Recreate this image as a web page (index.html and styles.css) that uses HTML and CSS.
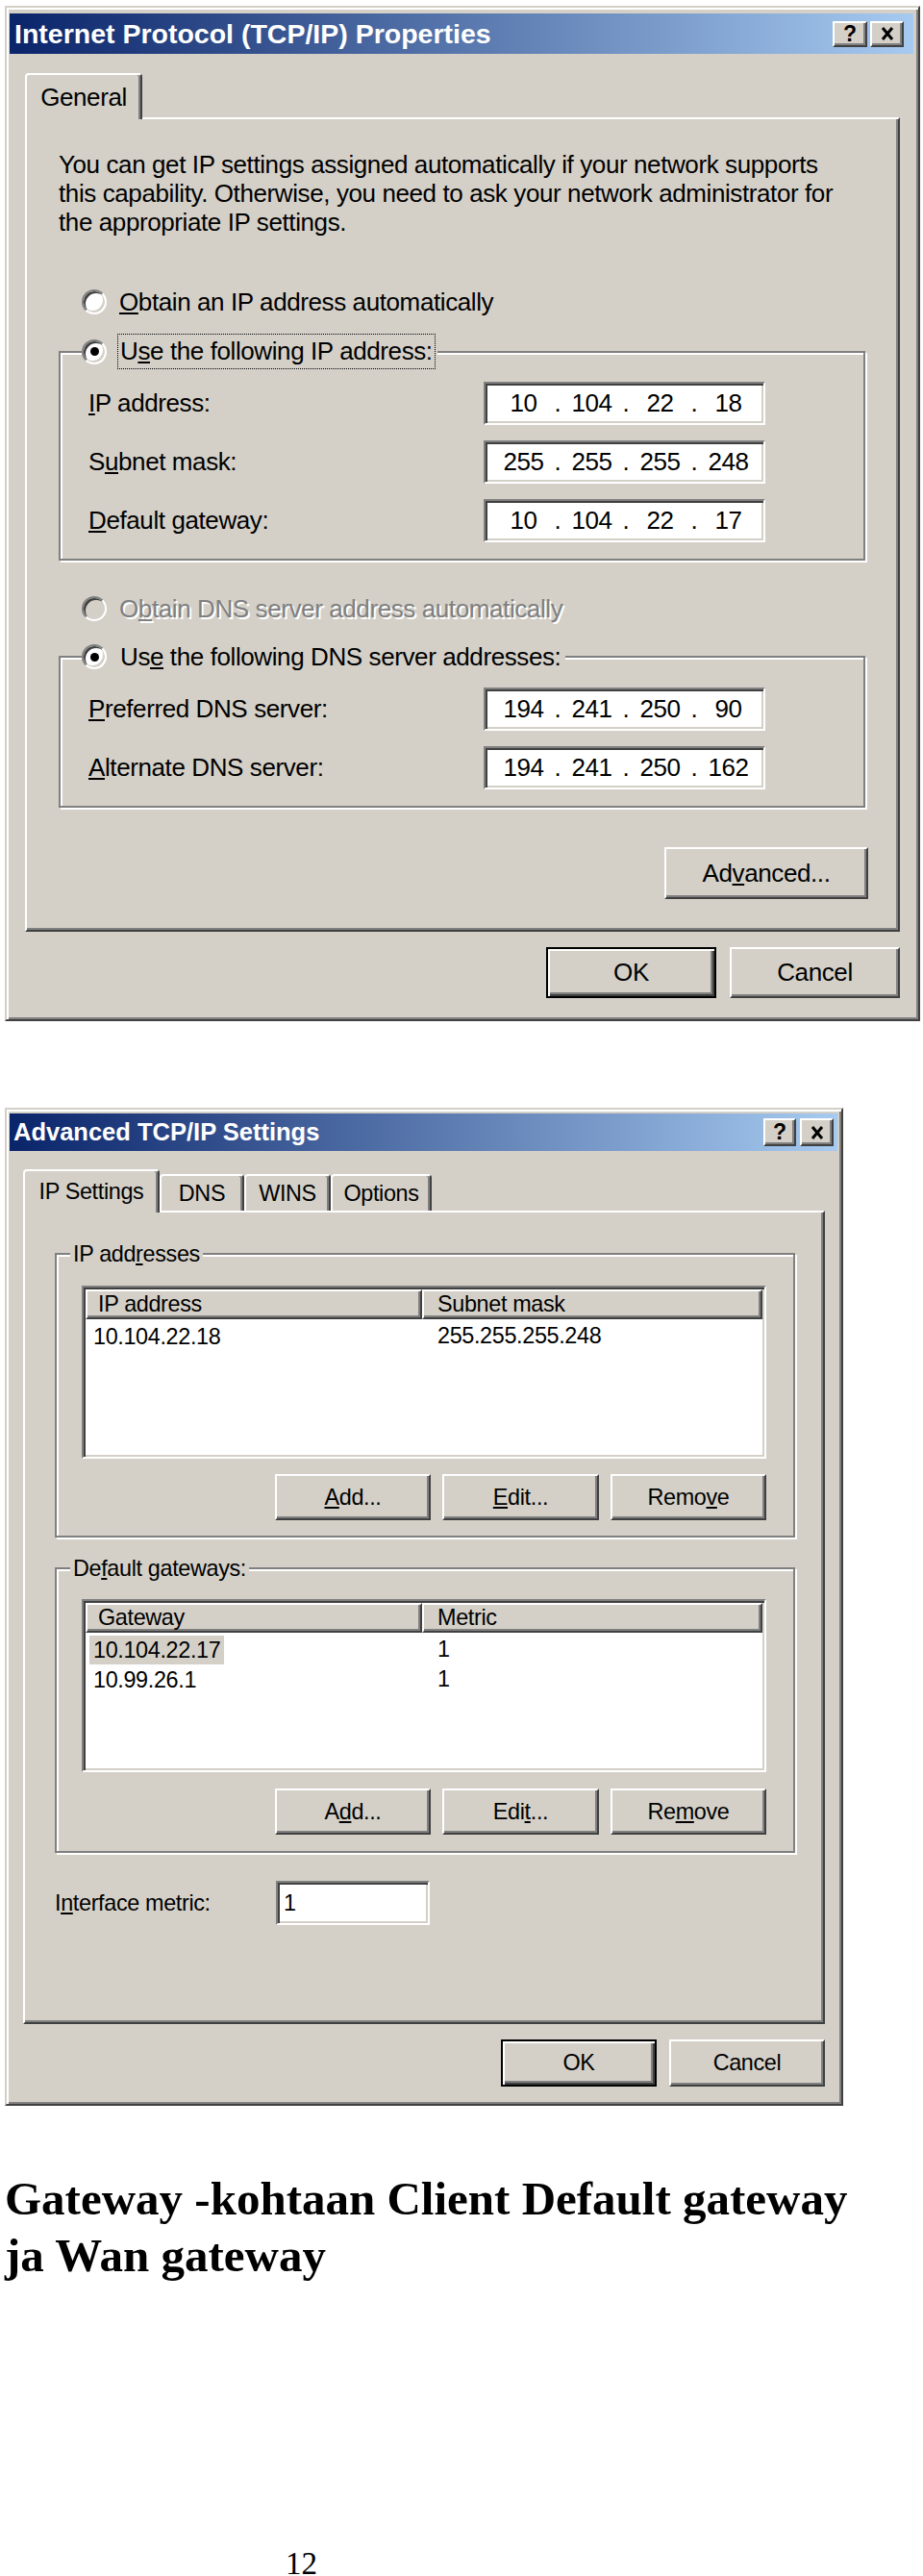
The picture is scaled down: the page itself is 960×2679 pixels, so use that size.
FILE: index.html
```html
<!DOCTYPE html>
<html>
<head>
<meta charset="utf-8">
<link rel="stylesheet" href="styles.css">
</head>
<body>
<div class="page">

  <div class="dlg dlg1">
    <div class="titlebar">
      <span class="title">Internet Protocol (TCP/IP) Properties</span>
      <div class="tbtns">
        <span class="tbtn q">?</span>
        <span class="tbtn"><svg class="xic" viewBox="0 0 14 16"><path d="M2 2 L12 14 M12 2 L2 14" stroke="#000" stroke-width="3" fill="none"/></svg></span>
      </div>
    </div>
    <div class="dbody">
      <div class="tabs">
        <div class="tab active">General</div>
      </div>
      <div class="panel">
        <div class="desc">You can get IP settings assigned automatically if your network supports<br>this capability. Otherwise, you need to ask your network administrator for<br>the appropriate IP settings.</div>

        <div class="rrow r1"><span class="rb"></span><span><u>O</u>btain an IP address automatically</span></div>

        <fieldset class="grp g1">
          <legend class="lg"><span class="rb on"></span><span class="lbtxt focus">U<u>s</u>e the following IP address:</span></legend>
          <div class="gbody">
            <div class="lbl"><u>I</u>P address:</div>
            <div class="ipf"><span class="seg">10</span><span class="dot">.</span><span class="seg">104</span><span class="dot">.</span><span class="seg">22</span><span class="dot">.</span><span class="seg">18</span></div>
            <div class="lbl">S<u>u</u>bnet mask:</div>
            <div class="ipf"><span class="seg">255</span><span class="dot">.</span><span class="seg">255</span><span class="dot">.</span><span class="seg">255</span><span class="dot">.</span><span class="seg">248</span></div>
            <div class="lbl"><u>D</u>efault gateway:</div>
            <div class="ipf"><span class="seg">10</span><span class="dot">.</span><span class="seg">104</span><span class="dot">.</span><span class="seg">22</span><span class="dot">.</span><span class="seg">17</span></div>
          </div>
        </fieldset>

        <div class="rrow r3 disabled"><span class="rb dis"></span><span>O<u>b</u>tain DNS server address automatically</span></div>

        <fieldset class="grp g2">
          <legend class="lg"><span class="rb on"></span><span class="lbtxt">Us<u>e</u> the following DNS server addresses:</span></legend>
          <div class="gbody">
            <div class="lbl"><u>P</u>referred DNS server:</div>
            <div class="ipf"><span class="seg">194</span><span class="dot">.</span><span class="seg">241</span><span class="dot">.</span><span class="seg">250</span><span class="dot">.</span><span class="seg">90</span></div>
            <div class="lbl"><u>A</u>lternate DNS server:</div>
            <div class="ipf"><span class="seg">194</span><span class="dot">.</span><span class="seg">241</span><span class="dot">.</span><span class="seg">250</span><span class="dot">.</span><span class="seg">162</span></div>
          </div>
        </fieldset>

        <div class="advrow"><button class="btn adv">Ad<u>v</u>anced...</button></div>
      </div>
      <div class="footer">
        <button class="btn def">OK</button>
        <button class="btn">Cancel</button>
      </div>
    </div>
  </div>

  <div class="dlg dlg2">
    <div class="titlebar">
      <span class="title">Advanced TCP/IP Settings</span>
      <div class="tbtns">
        <span class="tbtn q">?</span>
        <span class="tbtn"><svg class="xic" viewBox="0 0 14 16"><path d="M2 2 L12 14 M12 2 L2 14" stroke="#000" stroke-width="3" fill="none"/></svg></span>
      </div>
    </div>
    <div class="dbody">
      <div class="tabs">
        <div class="tab active t-ip">IP Settings</div>
        <div class="tab t-dns">DNS</div>
        <div class="tab t-wins">WINS</div>
        <div class="tab t-opt">Options</div>
      </div>
      <div class="panel">
        <fieldset class="grp h1">
          <legend class="lg2">IP add<u>r</u>esses</legend>
          <div class="gbody2">
            <div class="list">
              <div class="lhead"><div class="hcell c1">IP address</div><div class="hcell c2">Subnet mask</div></div>
              <div class="lrows">
                <div class="lrow"><div class="c1"><span class="it">10.104.22.18</span></div><div class="c2">255.255.255.248</div></div>
              </div>
            </div>
            <div class="brow">
              <button class="btn sb w162"><u>A</u>dd...</button>
              <button class="btn sb w163"><u>E</u>dit...</button>
              <button class="btn sb w162">Remo<u>v</u>e</button>
            </div>
          </div>
        </fieldset>

        <fieldset class="grp h2">
          <legend class="lg2">De<u>f</u>ault gateways:</legend>
          <div class="gbody2 gb2">
            <div class="list">
              <div class="lhead"><div class="hcell c1">Gateway</div><div class="hcell c2">Metric</div></div>
              <div class="lrows">
                <div class="lrow"><div class="c1"><span class="it sel">10.104.22.17</span></div><div class="c2">1</div></div>
                <div class="lrow"><div class="c1"><span class="it">10.99.26.1</span></div><div class="c2">1</div></div>
              </div>
            </div>
            <div class="brow b2">
              <button class="btn sb w162">A<u>d</u>d...</button>
              <button class="btn sb w163">Edi<u>t</u>...</button>
              <button class="btn sb w162">Re<u>m</u>ove</button>
            </div>
          </div>
        </fieldset>

        <div class="metric"><span class="mlbl">I<u>n</u>terface metric:</span><div class="tf">1</div></div>
      </div>
      <div class="footer">
        <button class="btn def">OK</button>
        <button class="btn">Cancel</button>
      </div>
    </div>
  </div>

  <div class="heading">Gateway -kohtaan Client Default gateway ja Wan gateway</div>
  <div class="pageno">12</div>
</div>
</body>
</html>
```

FILE: styles.css
```css
* { box-sizing: border-box; }
html, body { margin: 0; padding: 0; background: #fff; overflow: hidden; }
body { font-family: "Liberation Sans", Arial, sans-serif; color: #000; }

.page { padding: 6px 0 0 5px; }

/* ---------- dialog frame ---------- */
.dlg {
  background: #d4d0c8;
  border: 2px solid;
  border-color: #d4d0c8 #404040 #404040 #d4d0c8;
  box-shadow: inset 2px 2px #fff, inset -2px -2px #808080;
  display: flex;
  flex-direction: column;
}
.dlg1 { width: 952px; height: 1056px; padding: 6px 5px 0 3px; font-size: 26px; letter-spacing: -0.4px; }
.dlg2 { width: 872px; height: 1038px; padding: 4px 4px 0 3px; font-size: 23.4px; letter-spacing: -0.35px; margin-top: 90px; }

.titlebar {
  flex: none;
  display: flex;
  align-items: center;
  justify-content: space-between;
  background: linear-gradient(to right, #0a246a, #a6caf0);
  color: #fff;
  font-weight: bold;
  letter-spacing: 0;
}
.dlg1 .titlebar { height: 42px; padding: 0 10px 0 5px; font-size: 28.5px; }
.dlg2 .titlebar { height: 39px; padding: 0 4px 0 4px; font-size: 25.5px; }

.tbtns { display: flex; gap: 3px; }
.dlg2 .tbtns { gap: 4px; }
.tbtn {
  display: flex;
  align-items: center;
  justify-content: center;
  background: #d4d0c8;
  border: 2px solid;
  border-color: #fff #404040 #404040 #fff;
  box-shadow: inset -2px -2px #808080;
  color: #000;
  font-size: 23px;
  font-weight: bold;
  line-height: 1;
}
.dlg1 .tbtn { width: 36px; height: 27px; }
.dlg1 .tbtn + .tbtn { width: 35px; }
.dlg2 .tbtn { width: 34px; height: 29px; }
.dlg2 .tbtn + .tbtn { width: 35px; }
.xic { width: 14px; height: 16px; }

/* ---------- body / tabs ---------- */
.dbody { flex: 1; display: flex; flex-direction: column; }
.dlg1 .dbody { padding: 20px 14px 0 16px; }
.dlg2 .dbody { padding: 19px 13px 0 14px; }

.tabs { display: flex; align-items: flex-end; flex: none; }
.dlg1 .tabs { height: 46px; }
.dlg2 .tabs { height: 43px; }

.tab {
  display: flex;
  align-items: center;
  justify-content: center;
  background: #d4d0c8;
  border: 2px solid;
  border-bottom: 0;
  border-color: #fff #404040 #404040 #fff;
  box-shadow: inset -2px 0 #808080;
  border-radius: 4px 4px 0 0;
}
.tab.active { position: relative; z-index: 1; margin-bottom: -2px; }
.dlg1 .tab.active { width: 122px; height: 48px; }
.dlg2 .tab { height: 38px; }
.dlg2 .tab.active { height: 45px; }
.t-ip { width: 142px; }
.t-dns { width: 88px; }
.t-wins { width: 90px; }
.t-opt { width: 105px; }

.panel {
  flex: none;
  background: #d4d0c8;
  border: 2px solid;
  border-color: #fff #404040 #404040 #fff;
  box-shadow: inset -2px -2px #808080;
}
.dlg1 .panel { height: 847px; }
.dlg2 .panel { height: 846px; }

.footer { display: flex; justify-content: flex-end; margin-top: 16px; }
.dlg1 .footer { gap: 14px; }
.dlg1 .footer .btn { width: 177px; height: 53px; }
.dlg2 .footer { gap: 13px; }
.dlg2 .footer .btn { width: 162px; height: 49px; }

/* ---------- buttons ---------- */
.btn {
  font: inherit;
  letter-spacing: inherit;
  color: #000;
  background: #d4d0c8;
  border: 2px solid;
  border-color: #fff #404040 #404040 #fff;
  box-shadow: inset -2px -2px #808080;
  padding: 0;
  display: flex;
  align-items: center;
  justify-content: center;
}
.btn.def {
  border-color: #000;
  box-shadow: inset 2px 2px #fff, inset -2px -2px #404040, inset -4px -4px #808080;
}

/* ---------- dialog 1 content ---------- */
.desc { margin: 32px 0 0 33px; line-height: 30px; }

.rrow { display: flex; align-items: center; gap: 13px; height: 36px; margin-left: 57px; }
.r1 { margin-top: 50px; }
.r3 { margin-top: 32px; }
.disabled { color: #808080; text-shadow: 2px 2px #fff; }

.rb {
  flex: none;
  width: 26px;
  height: 26px;
  border-radius: 50%;
  background: #fff;
  border: 2px solid;
  border-color: #808080 #fff #fff #808080;
  box-shadow: inset 2px 2px #404040, inset -2px -2px #d4d0c8;
  display: flex;
  align-items: center;
  justify-content: center;
}
.rb.on::after { content: ""; width: 9px; height: 9px; border-radius: 50%; background: #000; }
.rb.dis { background: #d4d0c8; }

.grp {
  min-width: 0;
  padding: 0;
  border: 2px solid #808080;
  box-shadow: inset 2px 2px #fff, 2px 2px #fff;
}
.g1 { margin: 15px 34px 0 33px; }
.g2 { margin: 13.5px 34px 0 33px; }

.lg {
  display: flex;
  align-items: center;
  gap: 11px;
  height: 37px;
  margin-left: 22px;
  padding: 0 2px 0 0;
  background: #d4d0c8;
}
.lbtxt { border: 1px solid transparent; padding: 0 2px; line-height: 35px; }
.lbtxt.focus { border: 1px dotted #000; }

.gbody {
  display: grid;
  grid-template-columns: 411px 293px;
  row-gap: 16px;
  align-items: center;
  padding: 13px 0 17px 29px;
}
.g2 .gbody { padding-top: 13.5px; }

.ipf {
  height: 45px;
  display: flex;
  align-items: center;
  padding: 0 0 0 4px;
  background: #fff;
  border: 2px solid;
  border-color: #808080 #fff #fff #808080;
  box-shadow: inset 2px 2px #404040, inset -2px -2px #d4d0c8;
}
.seg { width: 71px; text-align: center; flex: none; }
.dot { width: 0; display: flex; justify-content: center; flex: none; }

.advrow { display: flex; justify-content: flex-end; margin: 41px 31px 0 0; }
.btn.adv { width: 212px; height: 54px; }

/* ---------- dialog 2 content ---------- */
.h1 { margin: 27.5px 29px 0 31px; }
.h2 { margin: 17.5px 29px 0 31px; }
.lg2 { margin-left: 14px; padding: 0 3px; line-height: 30px; background: #d4d0c8; }

.gbody2 { padding: 18.5px 28px 15.5px 26px; }
.gbody2.gb2 { padding: 17px 28px 17px 26px; }

.list {
  height: 180px;
  background: #fff;
  border: 2px solid;
  border-color: #808080 #fff #fff #808080;
  box-shadow: inset 2px 2px #404040, inset -2px -2px #d4d0c8;
  padding: 2px;
}
.lhead { display: flex; height: 31px; }
.hcell {
  display: flex;
  align-items: center;
  background: #d4d0c8;
  border: 2px solid;
  border-color: #fff #404040 #404040 #fff;
  box-shadow: inset -2px -2px #808080;
}
.hcell.c1 { width: 350px; padding-left: 11px; }
.hcell.c2 { flex: 1; padding-left: 14px; }
.lrows { padding-top: 2px; }
.lrow { display: flex; align-items: center; height: 31px; }
.lrow .c1 { width: 350px; padding-left: 4px; }
.lrow .c2 { padding-left: 16px; }
.it { display: inline-block; padding: 0 4px; line-height: 30px; }
.it.sel { background: #d4d0c8; }

.brow { display: flex; justify-content: flex-end; gap: 12px; margin-top: 16px; }
.brow.b2 { margin-top: 17px; }
.btn.sb { height: 48px; }
.w162 { width: 162px; }
.w163 { width: 163px; }

.metric { display: flex; align-items: center; margin: 29px 0 0 31px; }
.mlbl { width: 230px; }
.tf {
  width: 160px;
  height: 46px;
  display: flex;
  align-items: center;
  padding-left: 6px;
  background: #fff;
  border: 2px solid;
  border-color: #808080 #fff #fff #808080;
  box-shadow: inset 2px 2px #404040, inset -2px -2px #d4d0c8;
}

/* ---------- page text ---------- */
.heading {
  margin-top: 67px;
  width: 900px;
  font-family: "Liberation Serif", "Times New Roman", serif;
  font-weight: bold;
  font-size: 49px;
  line-height: 59px;
}
.pageno {
  margin: 279px 0 0 292px;
  font-family: "Liberation Serif", "Times New Roman", serif;
  font-size: 33px;
  line-height: 24px;
}
```
